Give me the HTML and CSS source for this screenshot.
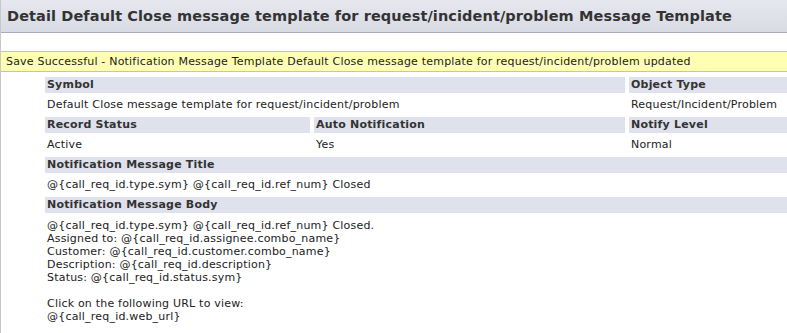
FILE: index.html
```html
<!DOCTYPE html>
<html>
<head>
<meta charset="utf-8">
<link rel="stylesheet" href="styles.css">
</head>
<body>
<div class="page">
  <div class="titlebar"><h1 class="title">Detail Default Close message template for request/incident/problem Message Template</h1></div>
  <div class="msg">Save Successful - Notification Message Template Default Close message template for request/incident/problem updated</div>
  <div class="detail">
    <div class="lbl span2">Symbol</div>
    <div class="lbl">Object Type</div>
    <div class="val span2">Default Close message template for request/incident/problem</div>
    <div class="val">Request/Incident/Problem</div>

    <div class="lbl">Record Status</div>
    <div class="lbl">Auto Notification</div>
    <div class="lbl">Notify Level</div>
    <div class="val">Active</div>
    <div class="val">Yes</div>
    <div class="val">Normal</div>

    <div class="lbl span3">Notification Message Title</div>
    <div class="val span3">@{call_req_id.type.sym} @{call_req_id.ref_num} Closed</div>

    <div class="lbl span3">Notification Message Body</div>
    <div class="val span3 body">@{call_req_id.type.sym} @{call_req_id.ref_num} Closed.
Assigned to: @{call_req_id.assignee.combo_name}
Customer: @{call_req_id.customer.combo_name}
Description: @{call_req_id.description}
Status: @{call_req_id.status.sym}

Click on the following URL to view:
@{call_req_id.web_url}</div>
  </div>
</div>
</body>
</html>
```
FILE: styles.css
```css
html, body {
  margin: 0;
  padding: 0;
  background: #ffffff;
}
body {
  font-family: "DejaVu Sans", Verdana, sans-serif;
  font-size: 11px;
  letter-spacing: 0.2px;
  color: #222;
}
.page {
  min-height: 333px;
  border-left: 1px solid #c8c8c8;
  box-sizing: border-box;
  overflow: hidden;
}
.titlebar {
  height: 32px;
  background: linear-gradient(#e6e7ef, #d9dbe4);
  border-bottom: 1px solid #a8abb6;
  display: flex;
  align-items: center;
  padding-left: 6px;
}
.title {
  margin: 0;
  font-size: 14.5px;
  letter-spacing: 0.1px;
  font-weight: bold;
  color: #333;
  white-space: nowrap;
}
.msg {
  margin-top: 18px;
  height: 19px;
  line-height: 19px;
  background: #ffffb4;
  border-top: 1px solid #c4c4b0;
  border-bottom: 1px solid #c4c4b0;
  padding-left: 5px;
  color: #222;
  white-space: nowrap;
}
.detail {
  margin: 5px 0 0 44px;
  display: grid;
  grid-template-columns: 265px 311px 1fr;
  column-gap: 4px;
  row-gap: 4px;
}
.lbl {
  height: 16px;
  line-height: 16px;
  background: #dfe2ec;
  font-weight: bold;
  color: #333;
  padding-left: 2px;
  white-space: nowrap;
}
.val {
  min-height: 16px;
  line-height: 16px;
  padding-left: 2px;
  color: #222;
  white-space: nowrap;
}
.span2 { grid-column: span 2; }
.span3 { grid-column: span 3; }
.body {
  white-space: pre;
  line-height: 13px;
  padding-top: 2px;
}
```
